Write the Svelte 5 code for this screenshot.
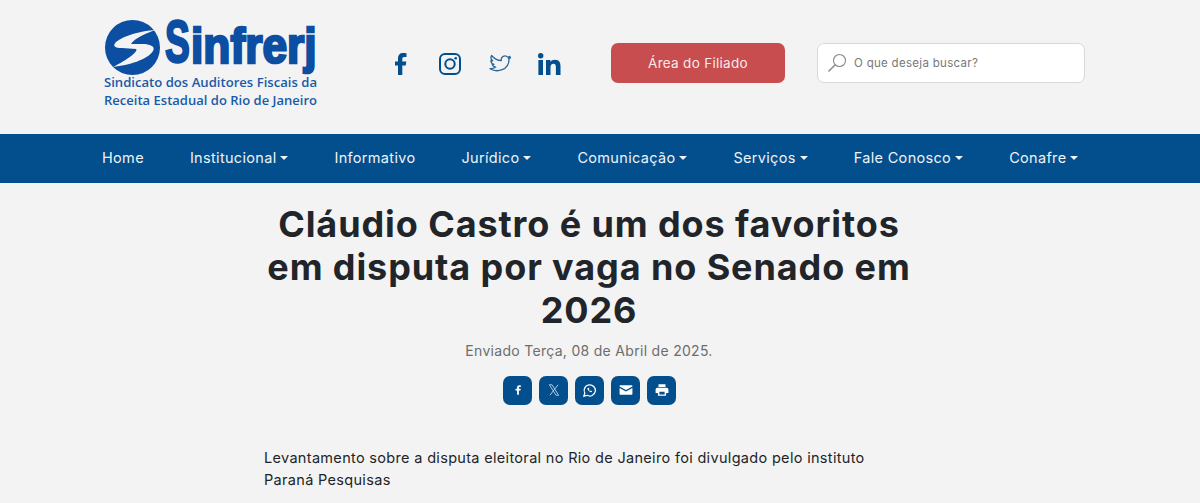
<script>
  const nav = [
    { t: 'Home' }, { t: 'Institucional', c: 1 }, { t: 'Informativo' }, { t: 'Jurídico', c: 1 },
    { t: 'Comunicação', c: 1 }, { t: 'Serviços', c: 1 }, { t: 'Fale Conosco', c: 1 }, { t: 'Conafre', c: 1 }
  ];
</script>

<header class="top">
  <a class="logo" href="#top" aria-label="Sinfrerj">
    <svg width="216" height="94" viewBox="0 0 216 94">
      <circle cx="29.500" cy="29.500" r="27.500" fill="#0b4ea2"/>
      <path d="M52 12 C38 13 22 17 13 24 C9 28 12 30 19 30 L33 31 C36 33 24 42 10 49 C26 47 44 42 50 33 C53 28 46 26 40 26 L28 26 C32 20 42 16 52 12 Z" fill="#f3f3f3"/>
      <text class="brand big" transform="translate(62 44) scale(.62 1)">S</text>
      <text class="brand" transform="translate(88 45) scale(.887 1)">infrerj</text>
      <text class="sub" x="1" y="69" textLength="213" lengthAdjust="spacingAndGlyphs">Sindicato dos Auditores Fiscais da</text>
      <text class="sub" x="1" y="87" textLength="213" lengthAdjust="spacingAndGlyphs">Receita Estadual do Rio de Janeiro</text>
    </svg>
  </a>
  <div class="social">
    <span class="cell"><svg width="12" height="22" viewBox="0 0 12 22"><path d="M3 22V12.500H0V8.500h3V5.500C3 2 5 0 8 0c1.500 0 3 .2 3.500.3V4H9.400C7.700 4 7.300 4.800 7.300 6v2.500h4L10.700 12.500H7.300V22z" fill="#034e8c"/></svg></span>
    <span class="cell"><svg width="22" height="22" viewBox="0 0 22 22" fill="none" stroke="#034e8c"><rect x="1" y="1" width="20" height="20" rx="5" stroke-width="2"/><circle cx="11" cy="11" r="4.700" stroke-width="2"/><circle cx="16.700" cy="5.300" r="1.300" fill="#034e8c" stroke="none"/></svg></span>
    <span class="cell"><svg width="24" height="22" viewBox="0 0 24 22" fill="none" stroke="#2b679b" stroke-width="1.300" stroke-linejoin="round"><path d="M22.500 4.800c-.6.400-1.300.6-2 .7.700-.5 1.300-1.300 1.500-2.200-.7.400-1.400.7-2.200.9a3.800 3.800 0 0 0-6.500 3.400C9.600 7.400 6 5.500 3.600 2.500c-1.100 2-.6 4 1 5.300-.6 0-1.200-.2-1.700-.4 0 1.900 1.200 3.400 3 3.900-.5.200-1.100.2-1.700.1.500 1.600 1.900 2.600 3.500 2.700A7.600 7.600 0 0 1 2 15.700c7 4.300 19 1.500 19-9.500 0-.2 0-.4 0-.6.600-.2 1.100-.5 1.500-.8z"/></svg></span>
    <span class="cell"><svg width="23" height="22" viewBox="0 0 23 22" fill="#034e8c"><circle cx="2.700" cy="2.700" r="2.700"/><rect x=".4" y="7" width="4.600" height="15"/><path d="M8 7h4.400v2c.8-1.400 2.400-2.300 4.400-2.300 4.600 0 5.700 2.900 5.700 6.800V22h-4.600v-7.500c0-1.900-.2-3.700-2.500-3.700s-2.900 1.800-2.900 3.700V22H8z"/></svg></span>
  </div>
  <a class="member" href="#top">Área do Filiado</a>
  <div class="search">
    <svg width="20" height="20" viewBox="0 0 20 20" fill="none" stroke="#888" stroke-width="1.100"><circle cx="12.500" cy="7.500" r="6"/><path d="M8.200 11.800 1.500 18.500" stroke-width="1.500"/></svg>
    <span>O que deseja buscar?</span>
  </div>
</header>

<nav class="nav">
  {#each nav as item}
    <a href="#top" class:caret={item.c}>{item.t}</a>
  {/each}
</nav>

<main class="article">
  <h1>Cláudio Castro é um dos favoritos em disputa por vaga no Senado em 2026</h1>
  <p class="date">Enviado Terça, 08 de Abril de 2025.</p>
  <div class="share">
    <span class="sq"><svg width="14" height="14" viewBox="0 0 24 24" fill="#fff"><path d="M13.500 20v-7h2.700l.5-3h-3.200V8.300c0-.9.300-1.500 1.600-1.500h1.700V4.100c-.3 0-1.300-.1-2.400-.1-2.400 0-4 1.400-4 4.100V10H7.700v3h2.700v7z"/></svg></span>
    <span class="sq"><svg width="14" height="14" viewBox="0 0 24 24" fill="none" stroke="#c6d6e4" stroke-width="1.500"><path d="M4 3h4.500L20 21h-4.500zM19 3 5 21"/></svg></span>
    <span class="sq"><svg width="15" height="15" viewBox="0 0 24 24" fill="none" stroke="#fff" stroke-width="2"><path d="M3 21l1.400-5A9 9 0 1 1 8 19.700z"/><path d="M9 8c-.8 1 0 3 1.500 4.500S14 15 15.500 14.500l.7-1.500-2-1-.9.900c-1-.4-1.800-1.200-2.300-2.300l.9-.9-1-2z" fill="#fff" stroke="none"/></svg></span>
    <span class="sq"><svg width="14" height="14" viewBox="0 0 24 24" fill="#fff"><path d="M2 4h20a1 1 0 0 1 1 1v1l-11 6L1 6V5a1 1 0 0 1 1-1zM1 8.500l11 6 11-6V19a1 1 0 0 1-1 1H2a1 1 0 0 1-1-1z"/></svg></span>
    <span class="sq"><svg width="14" height="14" viewBox="0 0 24 24" fill="#fff"><path d="M6 2h12v5H6zM4 8h16a3 3 0 0 1 3 3v6h-4v5H5v-5H1v-6a3 3 0 0 1 3-3zm3.500 7v4.500h9V15z"/></svg></span>
  </div>
  <p class="lead">Levantamento sobre a disputa eleitoral no Rio de Janeiro foi divulgado pelo instituto Paraná Pesquisas</p>
</main>

<style>
  :global(body) {
    margin: 0;
    background: #f3f3f3;
    font-family: Inter, "Noto Sans", sans-serif;
    overflow: hidden;
  }
  .top {
    height: 134px;
    box-sizing: border-box;
    padding: 18px 0 0 103px;
    display: flex;
    align-items: flex-start;
  }
  .logo { display: block; width: 216px; height: 94px; }
  .logo svg { display: block; overflow: visible; }
  .brand {
    font: 700 50px "Liberation Sans", sans-serif;
    fill: #0b4ea2;
    stroke: #0b4ea2;
    stroke-width: 2.500px;
  }
  .brand.big { font-size: 60px; }
  .sub {
    font: 600 12.500px "Open Sans", sans-serif;
    fill: #1a5aa8;
  }
  .social {
    display: flex;
    align-items: center;
    margin: 35px 0 0 57px;
    height: 22px;
  }
  .cell {
    width: 49.500px;
    display: flex;
    justify-content: center;
  }
  .member {
    margin: 25px 0 0 37px;
    width: 174px;
    height: 40px;
    display: flex;
    align-items: center;
    justify-content: center;
    background: #c74d4f;
    border-radius: 7px;
    color: #f8ecec;
    font-size: 13.500px;
    letter-spacing: 0.3px;
    text-decoration: none;
  }
  .search {
    margin: 25px 0 0 32px;
    width: 268px;
    height: 40px;
    box-sizing: border-box;
    background: #fff;
    border: 1px solid #d8d8d8;
    border-radius: 7px;
    display: flex;
    align-items: center;
    gap: 7px;
    padding-left: 9px;
    color: #777;
    font-size: 11.500px;
    letter-spacing: 0.3px;
  }
  .nav {
    height: 49px;
    box-sizing: border-box;
    padding: 0 0 2px 102px;
    background: #034e8c;
    display: flex;
    align-items: center;
    gap: 46px;
  }
  .nav a {
    color: #eef3f7;
    font-size: 14.500px;
    letter-spacing: 0.32px;
    text-decoration: none;
    white-space: nowrap;
  }
  .nav a.caret::after {
    content: "";
    display: inline-block;
    margin-left: 4px;
    vertical-align: 3px;
    border-top: 4px solid #eef3f7;
    border-left: 4px solid transparent;
    border-right: 4px solid transparent;
  }
  .article {
    width: 650px;
    margin-left: 264px;
    padding-top: 20px;
    text-align: center;
  }
  h1 {
    margin: 0;
    color: #212529;
    font-size: 36px;
    line-height: 43px;
    font-weight: 700;
    letter-spacing: 0.9px;
  }
  .date {
    margin: 8.500px 0 0;
    color: #6d6d6d;
    font-size: 14px;
    letter-spacing: 0.3px;
    line-height: 20px;
  }
  .share {
    margin: 15px 0 0 1px;
    display: flex;
    justify-content: center;
    gap: 7px;
  }
  .sq {
    width: 29px;
    height: 29px;
    background: #034e8c;
    border-radius: 7px;
    display: flex;
    align-items: center;
    justify-content: center;
  }
  .lead {
    margin: 42.500px 0 0;
    text-align: left;
    color: #212529;
    font-size: 14.500px;
    letter-spacing: 0.32px;
    line-height: 22px;
  }
</style>
